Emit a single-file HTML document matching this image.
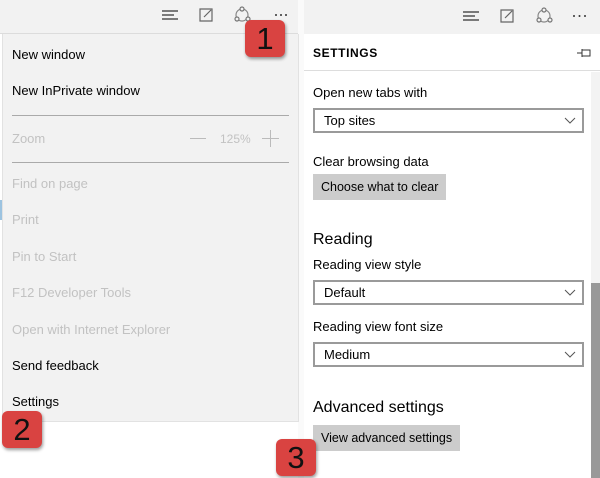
<!DOCTYPE html>
<html><head><style>
*{margin:0;padding:0;box-sizing:border-box}
body{width:600px;height:478px;background:#fff;position:relative;overflow:hidden;font-family:"Segoe UI","Liberation Sans",sans-serif;font-size:13px;color:#000}
.a{position:absolute}
.t{position:absolute;white-space:nowrap;line-height:16px}
.g{color:#c2c2c2}
.sel{position:absolute;left:313px;width:271px;height:25px;border:2px solid #9a9a9a;background:#fff}
.sel span{position:absolute;left:9px;top:3px;font-size:13px}
.sel svg{position:absolute;right:6px;top:7px}
.btn{position:absolute;left:313px;height:26px;background:#cccccc;padding:5px 8px;font-size:12.5px;line-height:16px}
.badge{position:absolute;width:40px;height:37px;background:#d94341;border-radius:6px;color:#111;font-size:31px;font-family:"Liberation Sans",sans-serif;text-align:center;line-height:37px;box-shadow:1px 2px 3px rgba(0,0,0,.4)}
</style></head><body>
<div class="a" style="left:0;top:0;width:300px;height:34px;background:#f2f2f2;border-bottom:1px solid #dcdcdc"></div>
<div class="a" style="left:300px;top:0;width:300px;height:34px;background:#f2f2f2"></div>
<div class="a" style="left:298px;top:0;width:6px;height:478px;background:#fafafa"></div>
<svg class="a" style="left:0;top:0" width="600" height="34" fill="none" stroke="#333" stroke-width="1.2">
<path d="M162 11h16M162 15h12M162 19h16"/><path d="M200 9h12v12h-12z M204 17l7-7" stroke="#666"/>
<circle cx="242" cy="15" r="6" stroke="#888"/><circle cx="242" cy="9" r="2" fill="#f2f2f2" stroke="#777"/><circle cx="237" cy="19" r="2" fill="#f2f2f2" stroke="#777"/><circle cx="248" cy="19" r="2" fill="#f2f2f2" stroke="#777"/>
<g fill="#333" stroke="none"><circle cx="276" cy="15" r="1"/><circle cx="281" cy="15" r="1"/><circle cx="286" cy="15" r="1"/></g>
<path d="M463 12h16M463 16h12M463 20h16"/><path d="M501 10h12v12h-12z M505 18l7-7" stroke="#666"/>
<circle cx="544" cy="16" r="6" stroke="#888"/><circle cx="544" cy="10" r="2" fill="#f2f2f2" stroke="#777"/><circle cx="539" cy="20" r="2" fill="#f2f2f2" stroke="#777"/><circle cx="550" cy="20" r="2" fill="#f2f2f2" stroke="#777"/>
<g fill="#333" stroke="none"><circle cx="574" cy="16" r="1"/><circle cx="579.5" cy="16" r="1"/><circle cx="585" cy="16" r="1"/></g>
</svg>
<div class="a" style="left:2px;top:34px;width:297px;height:388px;background:#f2f2f2;border:1px solid #e2e2e2;border-top:none"></div>
<div class="t" style="left:12px;top:47px">New window</div>
<div class="t" style="left:12px;top:83px">New InPrivate window</div>
<div class="a" style="left:12px;top:115px;width:277px;height:1px;background:#aaa"></div>
<div class="t g" style="left:12px;top:131px">Zoom</div>
<div class="a" style="left:190px;top:138px;width:16px;height:1px;background:#bbb"></div>
<div class="t g" style="left:220px;top:131px;font-size:12px">125%</div>
<div class="a" style="left:262px;top:138px;width:17px;height:1px;background:#bbb"></div>
<div class="a" style="left:270px;top:130px;width:1px;height:17px;background:#bbb"></div>
<div class="a" style="left:12px;top:162px;width:277px;height:1px;background:#aaa"></div>
<div class="t g" style="left:12px;top:176px">Find on page</div>
<div class="t g" style="left:12px;top:212px">Print</div>
<div class="t g" style="left:12px;top:249px">Pin to Start</div>
<div class="t g" style="left:12px;top:285px">F12 Developer Tools</div>
<div class="t g" style="left:12px;top:322px">Open with Internet Explorer</div>
<div class="t" style="left:12px;top:358px">Send feedback</div>
<div class="t" style="left:12px;top:394px">Settings</div>
<div class="a" style="left:0;top:200px;width:2px;height:20px;background:#9cc3e0"></div>
<div class="a" style="left:304px;top:34px;width:296px;height:444px;background:#fff"></div>
<div class="t" style="left:313px;top:45px;font-weight:bold;font-size:12px;letter-spacing:.6px">SETTINGS</div>
<svg class="a" style="left:577px;top:48px" width="14" height="10" fill="none" stroke="#333" stroke-width="1"><path d="M0 5h5M5 1v8M5 2h8v6h-8" /></svg>
<div class="a" style="left:304px;top:70px;width:296px;height:1px;background:#ddd"></div>
<div class="a" style="left:591px;top:72px;width:9px;height:406px;background:#f3f3f3"></div>
<div class="a" style="left:591px;top:283px;width:9px;height:195px;background:#999"></div>
<div class="t" style="left:313px;top:85px">Open new tabs with</div>
<div class="sel" style="top:108px"><span>Top sites</span><svg width="12" height="8"><path d="M1 1l5 5 5-5" fill="none" stroke="#555"/></svg></div>
<div class="t" style="left:313px;top:154px">Clear browsing data</div>
<div class="btn" style="top:174px">Choose what to clear</div>
<div class="t" style="left:313px;top:230px;font-size:16px;line-height:20px">Reading</div>
<div class="t" style="left:313px;top:257px">Reading view style</div>
<div class="sel" style="top:280px"><span>Default</span><svg width="12" height="8"><path d="M1 1l5 5 5-5" fill="none" stroke="#555"/></svg></div>
<div class="t" style="left:313px;top:319px">Reading view font size</div>
<div class="sel" style="top:342px"><span>Medium</span><svg width="12" height="8"><path d="M1 1l5 5 5-5" fill="none" stroke="#555"/></svg></div>
<div class="t" style="left:313px;top:398px;font-size:16px;line-height:20px">Advanced settings</div>
<div class="btn" style="top:425px">View advanced settings</div>
<div class="badge" style="left:245px;top:20px">1</div>
<div class="badge" style="left:2px;top:411px">2</div>
<div class="badge" style="left:276px;top:439px">3</div>
</body></html>
